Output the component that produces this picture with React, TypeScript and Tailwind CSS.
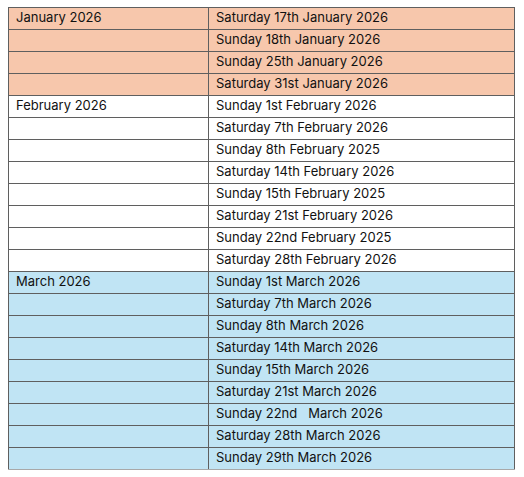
import React from 'react';

// Weekend dates table grouped by month
interface MonthGroup {
  month: string;
  bg: string;
  dates: string[];
}

const groups: MonthGroup[] = [
  {
    month: 'January 2026',
    bg: 'bg-[#f7c7ac]',
    dates: [
      'Saturday 17th January 2026',
      'Sunday 18th January 2026',
      'Sunday 25th January 2026',
      'Saturday 31st January 2026',
    ],
  },
  {
    month: 'February 2026',
    bg: 'bg-white',
    dates: [
      'Sunday 1st February 2026',
      'Saturday 7th February 2026',
      'Sunday 8th February 2025',
      'Saturday 14th February 2026',
      'Sunday 15th February 2025',
      'Saturday 21st February 2026',
      'Sunday 22nd February 2025',
      'Saturday 28th February 2026',
    ],
  },
  {
    month: 'March 2026',
    bg: 'bg-[#c0e4f4]',
    dates: [
      'Sunday 1st March 2026',
      'Saturday 7th March 2026',
      'Sunday 8th March 2026',
      'Saturday 14th March 2026',
      'Sunday 15th March 2026',
      'Saturday 21st March 2026',
      'Sunday 22nd\u00a0\u00a0 March 2026',
      'Saturday 28th March 2026',
      'Sunday 29th March 2026',
    ],
  },
];

export default function App() {
  return (
    <div className="min-h-screen bg-white pl-2 pt-[7px]" style={{ fontFamily: 'Inter, "Liberation Sans", sans-serif' }}>
      <table className="w-[507px] border-collapse text-[13px] text-[#111]">
        <tbody>
          {groups.map((g) =>
            g.dates.map((d, i) => (
              <tr key={d} className={`${g.bg} h-[22px] last:[&>td]:border-b-[#a8a8a8]`}>
                <td className="w-[200px] border border-[#5f5f5f] pl-[7px] pt-0 pb-[2px] leading-none">
                  {i === 0 ? g.month : ''}
                </td>
                <td className="border border-[#5f5f5f] pl-[7px] pt-0 pb-[2px] leading-none whitespace-pre">{d}</td>
              </tr>
            ))
          )}
        </tbody>
      </table>
    </div>
  );
}
